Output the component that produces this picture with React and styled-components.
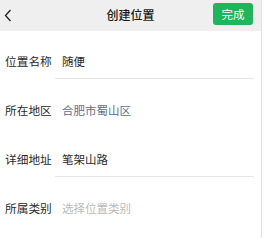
import React from "react";
import styled, { createGlobalStyle } from "styled-components";

const Global = createGlobalStyle`
  html, body { margin: 0; padding: 0; background: #fff; }
  body { font-family: "Noto Sans CJK SC", "Noto Sans", sans-serif; }
`;

const Page = styled.div`
  width: 261px;
  height: 238px;
  border-right: 1px solid #e2e2e2;
  background: #fff;
`;

const Header = styled.div`
  position: relative;
  height: 31px;
  background: #efefef;
  display: flex;
  align-items: center;
  justify-content: center;
`;

const Back = styled.button`
  position: absolute;
  left: 2px;
  top: 7px;
  width: 12px;
  height: 16px;
  padding: 0;
  border: 0;
  background: none;
  display: flex;
  align-items: center;
  justify-content: center;
`;

const Title = styled.div`
  font-size: 12px;
  font-weight: 500;
  color: #1a1a1a;
  line-height: 16px;
  margin-top: -1px;
`;

const Done = styled.button`
  position: absolute;
  left: 213px;
  top: 3px;
  width: 40px;
  height: 22px;
  border: 0;
  border-radius: 3px;
  background: #1fb55a;
  color: #fff;
  font-family: inherit;
  font-size: 11.5px;
  line-height: 22px;
  padding: 0;
`;

const Row = styled.div`
  display: flex;
  height: 49px;
  box-sizing: border-box;
  padding-top: 22px;
`;

const Label = styled.div`
  width: 50px;
  padding-left: 5px;
  font-size: 11.7px;
  line-height: 16px;
  color: #2a2a2a;
  white-space: nowrap;
`;

const Field = styled.div`
  flex: 1;
  margin-right: 7px;
  padding-left: 7px;
  height: 26px;
  box-sizing: border-box;
  border-bottom: 1px solid ${(p) => (p.$line ? "#e6e6e6" : "transparent")};
  font-size: 11.5px;
  line-height: 16px;
  color: ${(p) =>
    p.$tone === "link" ? "#5a6d98" : p.$tone === "placeholder" ? "#bababa" : "#2a2a2a"};
  white-space: nowrap;
`;

const rows = [
  { label: "位置名称", value: "随便", line: true },
  { label: "所在地区", value: "合肥市蜀山区", tone: "link" },
  { label: "详细地址", value: "笔架山路", line: true },
  { label: "所属类别", value: "选择位置类别", tone: "placeholder" },
];

export default function App() {
  return (
    <>
      <Global />
      <Page>
        <Header>
          <Back aria-label="返回">
            <svg width="8" height="13" viewBox="0 0 8 13">
              <path d="M6.5 1 L1.5 6.5 L6.5 12" fill="none" stroke="#222" strokeWidth="1.3" />
            </svg>
          </Back>
          <Title>创建位置</Title>
          <Done>完成</Done>
        </Header>
        {rows.map((r) => (
          <Row key={r.label}>
            <Label>{r.label}</Label>
            <Field $line={r.line} $tone={r.tone}>
              {r.value}
            </Field>
          </Row>
        ))}
      </Page>
    </>
  );
}
